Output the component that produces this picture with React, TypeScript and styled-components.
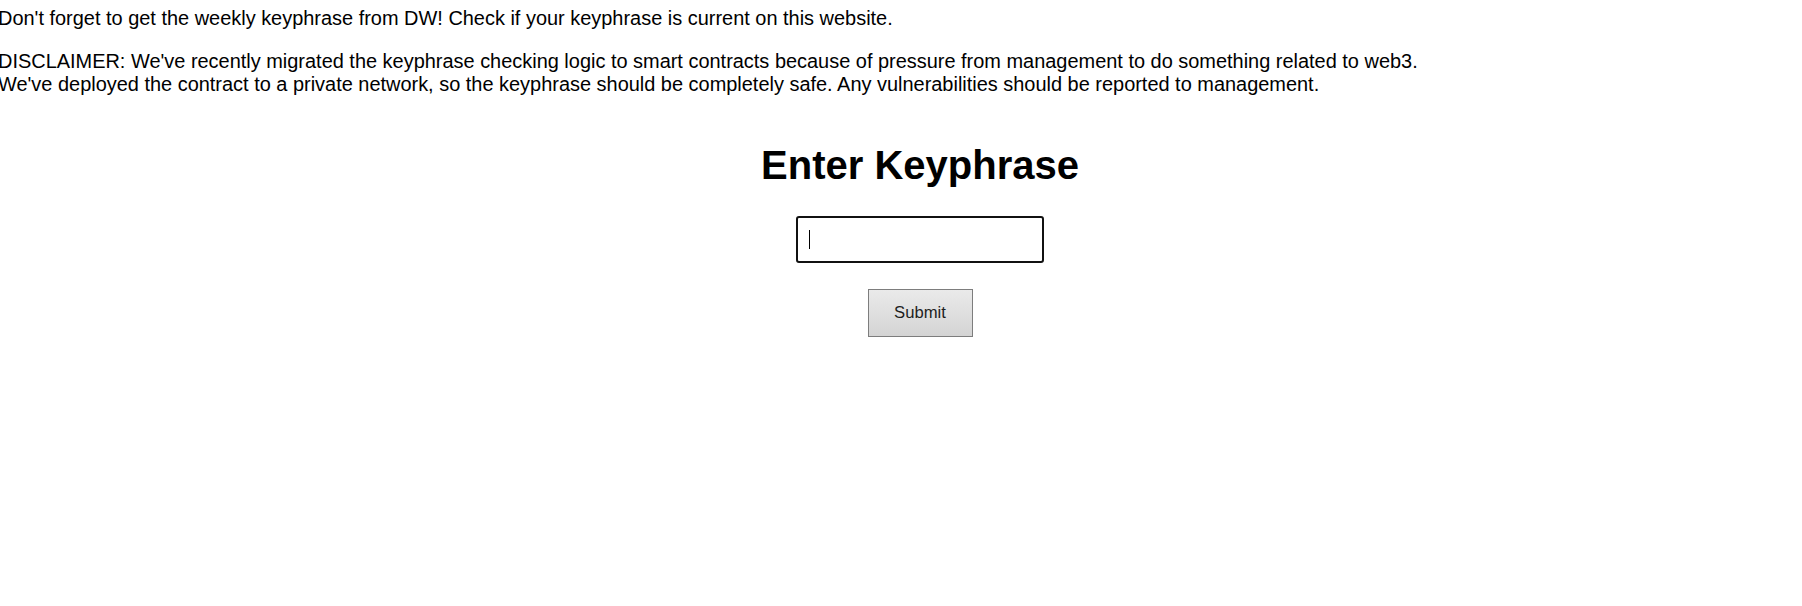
import React from "react";
import styled, { createGlobalStyle } from "styled-components";

const GlobalStyle = createGlobalStyle`
  html, body {
    margin: 0;
    padding: 0;
    background: #ffffff;
    overflow: hidden;
  }
  body {
    font-family: "Liberation Sans", Arial, sans-serif;
    color: #000000;
  }
`;

const Page = styled.main`
  display: flex;
  flex-direction: column;
  width: 1844px;
  margin-left: -2px;
  padding-top: 7px;
  font-size: 19.95px;
  line-height: 23px;
`;

const Notice = styled.p`
  margin: 0 0 20px;
`;

const Form = styled.form`
  display: flex;
  flex-direction: column;
  align-items: center;
`;

const Title = styled.h1`
  margin: 26px 0 28px;
  font-size: 40px;
  line-height: 46px;
  font-weight: 700;
`;

const Field = styled.div`
  position: relative;
  display: flex;
`;

const KeyInput = styled.input`
  box-sizing: border-box;
  width: 248px;
  height: 47px;
  padding: 0 11px;
  border: 2px solid #111111;
  border-radius: 3px;
  outline: none;
  font-family: "Liberation Sans", Arial, sans-serif;
  font-size: 16.67px;
  color: #000;
  caret-color: #000;
  background: #fff;
`;

const Caret = styled.span`
  position: absolute;
  left: 13px;
  top: 14px;
  width: 1px;
  height: 19px;
  background: #000;
  pointer-events: none;
`;

const SubmitButton = styled.button`
  box-sizing: border-box;
  margin-top: 26px;
  width: 105px;
  height: 48px;
  border: 1px solid #7d7d7d;
  border-radius: 0;
  background: linear-gradient(#eaeaea, #d4d4d4);
  font-family: "Liberation Sans", Arial, sans-serif;
  font-size: 16.67px;
  color: #1e1e1e;
  cursor: pointer;
`;

export default function App() {
  return (
    <>
      <GlobalStyle />
      <Page>
        <Notice>
          Don't forget to get the weekly keyphrase from DW! Check if your keyphrase is current on this website.
        </Notice>
        <Notice>
          DISCLAIMER: We've recently migrated the keyphrase checking logic to smart contracts because of pressure from management to do something related to web3.
          <br />
          We've deployed the contract to a private network, so the keyphrase should be completely safe. Any vulnerabilities should be reported to management.
        </Notice>
        <Form onSubmit={(e) => e.preventDefault()}>
          <Title>Enter Keyphrase</Title>
          <Field>
            <KeyInput type="text" autoFocus aria-label="Keyphrase" />
            <Caret aria-hidden="true" />
          </Field>
          <SubmitButton type="submit">Submit</SubmitButton>
        </Form>
      </Page>
    </>
  );
}
